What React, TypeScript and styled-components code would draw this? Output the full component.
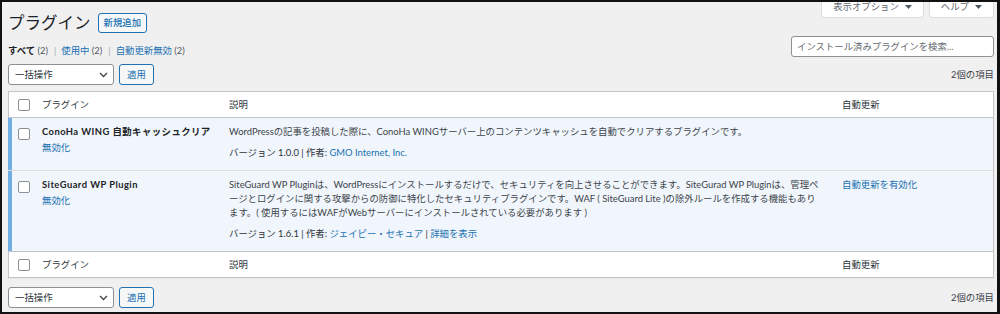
import React from 'react';
import styled, { createGlobalStyle } from 'styled-components';

const GlobalStyle = createGlobalStyle`
  html, body { margin: 0; padding: 0; background: #f0f0f1; }
  * { box-sizing: border-box; }
`;

const FONT = `Lato, "Noto Sans CJK JP", sans-serif`;

const Page = styled.div`
  width: 1000px;
  height: 314px;
  overflow: hidden;
  border-style: solid;
  border-color: #111;
  border-width: 2px 3px 2px 2px;
  background: #f0f0f1;
  padding: 0 3px 0 6px;
  font-family: ${FONT};
  font-size: 9.4px;
  line-height: 14px;
  color: #3c434a;
`;

const TopBar = styled.div`
  display: flex;
  justify-content: space-between;
  align-items: flex-start;
  height: 31px;
`;

const TitleGroup = styled.div`
  display: flex;
  align-items: center;
  gap: 7px;
  padding-top: 11px;
`;

const Title = styled.h1`
  margin: 0;
  font-size: 16.5px;
  font-weight: 400;
  line-height: 20px;
  color: #1d2327;
`;

const OutlineButton = styled.button`
  height: ${p => (p.$tall ? 21 : 20)}px;
  padding: 0 ${p => (p.$tall ? 7 : 5)}px;
  border: 1px solid #2271b1;
  border-radius: 3px;
  background: #f6f7f7;
  color: #2271b1;
  font-family: ${FONT};
  font-size: 9.4px;
  font-weight: ${p => (p.$tall ? 400 : 500)};
  line-height: 14px;
  cursor: pointer;
`;

const ScreenMeta = styled.div`
  display: flex;
  gap: 5px;
  margin-top: -2px;
`;

const MetaTab = styled.div`
  display: flex;
  align-items: center;
  gap: 6px;
  height: 18px;
  padding: 0 11px 3px;
  background: #fff;
  border: 1px solid #dcdcde;
  border-top: none;
  border-radius: 0 0 4px 4px;
  color: #646970;
  line-height: 14px;
`;

const FilterRow = styled.div`
  display: flex;
  justify-content: space-between;
  align-items: flex-start;
  margin-top: 3px;
`;

const Subsub = styled.ul`
  display: flex;
  list-style: none;
  margin: 8px 0 0;
  padding: 0;
  color: #50575e;
`;

const SubItem = styled.li`
  white-space: nowrap;
`;

const SubLink = styled.a`
  color: ${p => (p.$current ? '#1d2327' : '#2271b1')};
  font-weight: ${p => (p.$current ? 700 : 400)};
  text-decoration: none;
`;

const Sep = styled.span`
  color: #a7aaad;
  padding: 0 5px 0 6px;
`;

const SearchInput = styled.input`
  width: 203px;
  height: 21px;
  padding: 0 5px;
  border: 1px solid #8c8f94;
  border-radius: 3px;
  background: #fff;
  font-family: ${FONT};
  font-size: 9.4px;
  color: #2c3338;
  &::placeholder { color: #646970; }
`;

const Tablenav = styled.div`
  display: flex;
  justify-content: space-between;
  align-items: center;
  height: 21px;
  margin-top: ${p => p.$gap}px;
`;

const BulkGroup = styled.div`
  display: flex;
  gap: 5px;
`;

const FauxSelect = styled.div`
  display: flex;
  justify-content: space-between;
  align-items: center;
  width: 106px;
  height: 21px;
  padding: 0 5px 0 6px;
  border: 1px solid #8c8f94;
  border-radius: 3px;
  background: #fff;
  color: #2c3338;
`;

const ItemCount = styled.span`
  color: #3c434a;
  padding-top: 1px;
`;

const Table = styled.div`
  margin-top: 6px;
  border: 1px solid #c3c4c7;
  background: #fff;
  box-shadow: 0 1px 1px rgba(0, 0, 0, 0.04);
`;

const HeadRow = styled.div`
  display: grid;
  grid-template-columns: 26px 187px 613px 1fr;
  ${p => (p.$foot ? 'border-top: 1px solid #c3c4c7;' : 'border-bottom: 1px solid #c3c4c7;')}
`;

const HeadCell = styled.div`
  padding: 6px 7px 5px;
  color: #2c3338;
  white-space: nowrap;
`;

const BodyRow = styled.div`
  display: grid;
  grid-template-columns: 27px 187px 613px 1fr;
  margin-left: -1px;
  background: #f0f6fc;
  box-shadow: inset 4px 0 0 #72aee6;
  & + & { border-top: 1px solid #dcdcde; }
`;

const CheckCell = styled.div`
  padding: ${p => (p.$body ? '10px 0 0 10px' : '7px 0 0 9px')};
`;

const Checkbox = styled.span`
  display: block;
  width: 12px;
  height: 12px;
  border: 1px solid #8c8f94;
  border-radius: 2px;
  background: #fff;
`;

const BodyCell = styled.div`
  padding: 7px 7px 10px;
  white-space: nowrap;
`;

const PluginTitle = styled.strong`
  display: block;
  font-weight: 700;
  letter-spacing: 0.45px;
  color: #1d2327;
`;

const RowActions = styled.div`
  padding-top: 2px;
`;

const Link = styled.a`
  color: #2271b1;
  text-decoration: none;
`;

const DescText = styled.div`
  margin: 0 0 7px;
  color: #3c434a;
`;

const DescLine = styled.span`
  display: block;
`;

const VersionLine = styled.div`
  color: #2c3338;
`;

const Caret = () => (
  <svg width="7" height="4" viewBox="0 0 7 4">
    <polygon points="0,0 7,0 3.5,4" fill="#50575e" />
  </svg>
);

const Chevron = () => (
  <svg width="9" height="6" viewBox="0 0 9 6">
    <path d="M1 1 L4.5 4.5 L8 1" fill="none" stroke="#3c434a" strokeWidth="1.3" />
  </svg>
);

const BulkActions = ({ gap }: { gap: number }) => (
  <Tablenav $gap={gap}>
    <BulkGroup>
      <FauxSelect>
        <span>一括操作</span>
        <Chevron />
      </FauxSelect>
      <OutlineButton $tall>適用</OutlineButton>
    </BulkGroup>
    <ItemCount>2個の項目</ItemCount>
  </Tablenav>
);

const HeaderCells = ({ foot }: { foot?: boolean }) => (
  <HeadRow $foot={foot}>
    <CheckCell>
      <Checkbox />
    </CheckCell>
    <HeadCell>プラグイン</HeadCell>
    <HeadCell>説明</HeadCell>
    <HeadCell>自動更新</HeadCell>
  </HeadRow>
);

export default function App() {
  return (
    <>
      <GlobalStyle />
      <Page>
        <TopBar>
          <TitleGroup>
            <Title>プラグイン</Title>
            <OutlineButton>新規追加</OutlineButton>
          </TitleGroup>
          <ScreenMeta>
            <MetaTab>
              表示オプション <Caret />
            </MetaTab>
            <MetaTab>
              ヘルプ <Caret />
            </MetaTab>
          </ScreenMeta>
        </TopBar>

        <FilterRow>
          <Subsub>
            <SubItem>
              <SubLink $current>すべて</SubLink> (2)
              <Sep>|</Sep>
            </SubItem>
            <SubItem>
              <SubLink>使用中</SubLink> (2)
              <Sep>|</Sep>
            </SubItem>
            <SubItem>
              <SubLink>自動更新無効</SubLink> (2)
            </SubItem>
          </Subsub>
          <SearchInput placeholder="インストール済みプラグインを検索..." />
        </FilterRow>

        <BulkActions gap={6} />

        <Table>
          <HeaderCells />
          <BodyRow>
            <CheckCell $body>
              <Checkbox />
            </CheckCell>
            <BodyCell>
              <PluginTitle>ConoHa WING 自動キャッシュクリア</PluginTitle>
              <RowActions>
                <Link>無効化</Link>
              </RowActions>
            </BodyCell>
            <BodyCell>
              <DescText>
                <DescLine>
                  WordPressの記事を投稿した際に、ConoHa WINGサーバー上のコンテンツキャッシュを自動でクリアするプラグインです。
                </DescLine>
              </DescText>
              <VersionLine>
                バージョン 1.0.0 | 作者: <Link>GMO Internet, Inc.</Link>
              </VersionLine>
            </BodyCell>
            <BodyCell />
          </BodyRow>
          <BodyRow>
            <CheckCell $body>
              <Checkbox />
            </CheckCell>
            <BodyCell>
              <PluginTitle>SiteGuard WP Plugin</PluginTitle>
              <RowActions>
                <Link>無効化</Link>
              </RowActions>
            </BodyCell>
            <BodyCell>
              <DescText>
                <DescLine>
                  SiteGuard WP Pluginは、WordPressにインストールするだけで、セキュリティを向上させることができます。SiteGurad WP Pluginは、管理ペ
                </DescLine>
                <DescLine>
                  ージとログインに関する攻撃からの防御に特化したセキュリティプラグインです。WAF ( SiteGuard Lite )の除外ルールを作成する機能もあり
                </DescLine>
                <DescLine>
                  ます。( 使用するにはWAFがWebサーバーにインストールされている必要があります )
                </DescLine>
              </DescText>
              <VersionLine>
                バージョン 1.6.1 | 作者: <Link>ジェイピー・セキュア</Link> | <Link>詳細を表示</Link>
              </VersionLine>
            </BodyCell>
            <BodyCell>
              <Link>自動更新を有効化</Link>
            </BodyCell>
          </BodyRow>
          <HeaderCells foot />
        </Table>

        <BulkActions gap={9} />
      </Page>
    </>
  );
}
